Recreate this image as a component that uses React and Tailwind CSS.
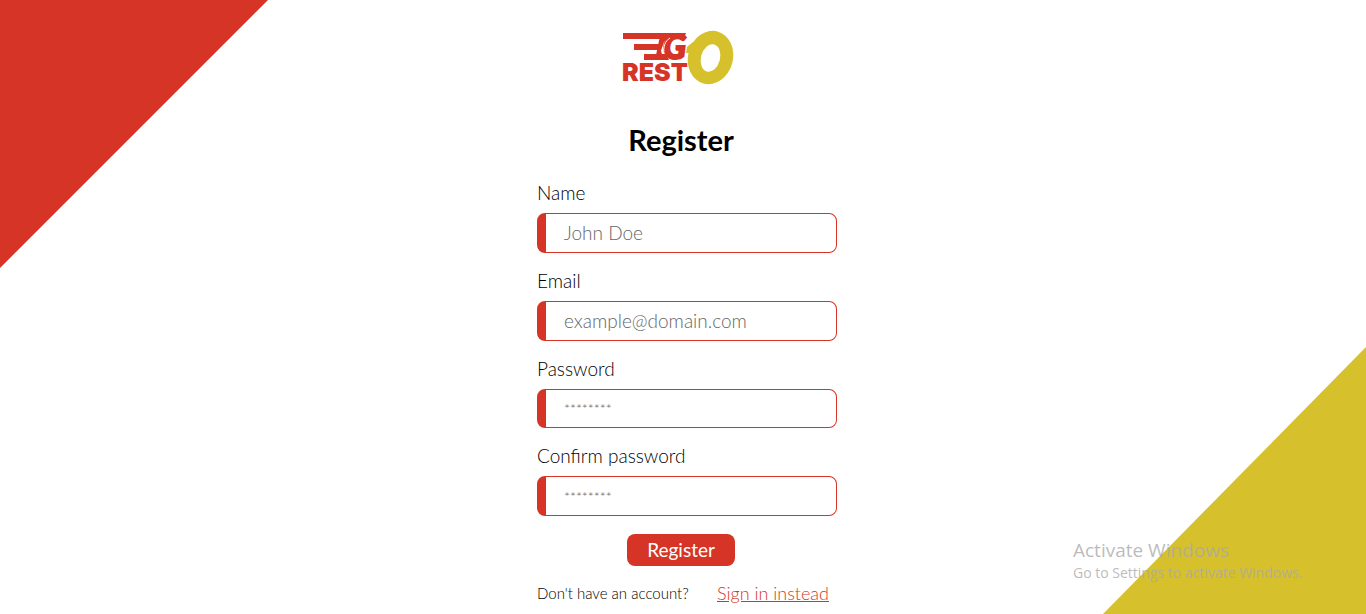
import React from "react";

const fields = [
  { id: "name", label: "Name", type: "text", placeholder: "John Doe", size: "h-10 pb-0.5 placeholder:text-[19px]" },
  { id: "email", label: "Email", type: "email", placeholder: "example@domain.com", size: "h-10 pb-0.5 placeholder:text-[19px]" },
  { id: "password", label: "Password", type: "password", placeholder: "********", size: "h-[39px] pb-1 placeholder:text-sm" },
  { id: "confirm", label: "Confirm password", type: "password", placeholder: "********", size: "h-10 pb-1 placeholder:text-sm" },
];

function Logo() {
  return (
    <svg viewBox="0 0 112 56" className="h-14 w-28 overflow-visible" role="img" aria-label="Go Resto">
      <g fill="#d63426">
        <path d="M0 3H63L61 9H0Z" />
        <path d="M11 14H40L38 20H11Z" />
        <path d="M21 24H43L46 30H21Z" />
        <path d="M37 6H46L41 12L38 20L40 30H32Z" />
        <text x="40" y="29" fontFamily="Lato, sans-serif" fontWeight="900" fontStyle="italic" fontSize="34" stroke="#d63426" strokeWidth="2">G</text>
        <text x="-1" y="51" fontFamily="Inter, sans-serif" fontWeight="900" fontSize="25">REST</text>
      </g>
      <path d="M47 8C42 11 40 17 41 24" fill="none" stroke="white" strokeWidth="1" />
      <path d="M64 17L70 12V23H63Z" fill="#d6c02b" />
      <ellipse cx="87.500" cy="27.500" rx="22.500" ry="27" transform="rotate(15 87.500 27.500)" fill="#d6c02b" />
      <ellipse cx="87.500" cy="28" rx="9.500" ry="14" transform="rotate(15 87.500 28)" fill="white" />
    </svg>
  );
}

export default function App() {
  return (
    <div className="relative min-h-screen overflow-hidden bg-white font-['Lato','Open_Sans',sans-serif] text-black">
      <div className="absolute left-0 top-0 size-[268px] bg-[#d63426] [clip-path:polygon(0_0,100%_0,0_100%)]" />
      <div className="absolute bottom-0 right-0 h-[267px] w-[263px] bg-[#d6c02b] [clip-path:polygon(100%_0,100%_100%,0_100%)]" />

      <main className="relative flex flex-col items-center pr-1 pt-[30px]">
        <div className="pr-1">
          <Logo />
        </div>
        <h1 className="mt-[34px] text-[29px] font-bold leading-10">Register</h1>

        <form className="mt-[21px] flex w-full max-w-[312px] flex-col items-center" onSubmit={(e) => e.preventDefault()}>
          <div className="flex w-full flex-col gap-4 pl-3">
            {fields.map((f) => (
              <div key={f.id} className="flex flex-col gap-2">
                <label htmlFor={f.id} className="text-[19px] font-light leading-6">{f.label}</label>
                <input
                  id={f.id}
                  type={f.type}
                  placeholder={f.placeholder}
                  className={`${f.size} w-full rounded-lg border border-l-[9px] border-[#d63426] bg-white px-[18px] text-[19px] font-light outline-none placeholder:text-[#666666]`}
                />
              </div>
            ))}
          </div>
          <button type="submit" className="mt-[18px] h-8 w-[108px] rounded-lg bg-[#d63426] text-[19px] text-white">
            Register
          </button>
          <p className="mt-[15px] flex w-full items-center justify-between pb-2 pl-3 pr-2 font-light leading-6">
            <span className="text-[15px]">Don't have an account?</span>
            <a href="#signin" className="text-lg leading-6 text-[#d63426] underline">Sign in instead</a>
          </p>
        </form>
      </main>

      <aside className="absolute bottom-[30px] right-[57px] w-[236px] whitespace-nowrap font-['Open_Sans',sans-serif] text-[#aaaaaa]/80">
        <p className="text-[19px] leading-6">Activate Windows</p>
        <p className="text-sm leading-[22px]">Go to Settings to activate Windows.</p>
      </aside>
    </div>
  );
}
